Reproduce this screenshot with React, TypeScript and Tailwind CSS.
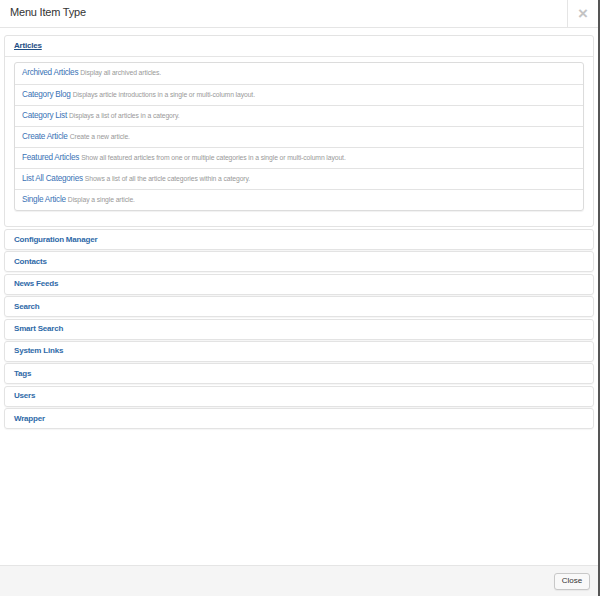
import React from 'react';

const articleItems = [
  { title: 'Archived Articles', desc: 'Display all archived articles.' },
  { title: 'Category Blog', desc: 'Displays article introductions in a single or multi-column layout.' },
  { title: 'Category List', desc: 'Displays a list of articles in a category.' },
  { title: 'Create Article', desc: 'Create a new article.' },
  { title: 'Featured Articles', desc: 'Show all featured articles from one or multiple categories in a single or multi-column layout.' },
  { title: 'List All Categories', desc: 'Shows a list of all the article categories within a category.' },
  { title: 'Single Article', desc: 'Display a single article.' },
];

const groups = [
  'Configuration Manager',
  'Contacts',
  'News Feeds',
  'Search',
  'Smart Search',
  'System Links',
  'Tags',
  'Users',
  'Wrapper',
];

const App = () => {
  return (
    <div
      className="w-[600px] h-[596px] flex flex-col bg-white border-r-2 border-[#555] overflow-hidden"
      style={{ fontFamily: '"Liberation Sans", Arial, sans-serif' }}
    >
      {/* header */}
      <div className="flex h-[28px] border-b border-[#e5e5e5] shrink-0">
        <h3 className="flex-1 pl-[10px] pt-[6px] text-[11px] leading-[13px] tracking-[-0.2px] text-[#333]">Menu Item Type</h3>
        <div className="w-[31px] border-l border-[#e5e5e5] flex items-center justify-center">
          <span className="text-[17px] font-bold text-[#c4c4c4] leading-none">×</span>
        </div>
      </div>

      {/* body */}
      <div className="flex-1 px-[4px] pt-[7px]">
        <div className="border border-[#e3e3e3] rounded-[3px] mb-[2px]">
          <div className="h-[21px] border-b border-[#e5e5e5] px-[9px] flex items-center">
            <span className="text-[8px] tracking-[-0.2px] font-bold text-[#1f4f86] underline">Articles</span>
          </div>
          <div className="px-[9px] pt-[5px] pb-[15px]">
            <div className="border border-[#dcdcdc] rounded-[3px] shadow-[0_1px_1px_rgba(0,0,0,0.06)]">
              {articleItems.map((it, i) => (
                <div
                  key={it.title}
                  className={`h-[21px] flex items-center px-[7px] whitespace-nowrap ${i > 0 ? 'border-t border-[#e3e3e3]' : ''}`}
                >
                  <span className="text-[8.2px] tracking-[-0.25px] text-[#3a72b5]">{it.title}</span>
                  <span className="text-[6.8px] tracking-[-0.1px] text-[#999] ml-[2px]">{it.desc}</span>
                </div>
              ))}
            </div>
          </div>
        </div>

        {groups.map(g => (
          <div
            key={g}
            className="h-[21px] border border-[#e3e3e3] rounded-[3px] mb-[1.4px] px-[9px] flex items-center shadow-[0_1px_1px_rgba(0,0,0,0.04)]"
          >
            <span className="text-[8px] tracking-[-0.2px] font-bold text-[#2f6aa8]">{g}</span>
          </div>
        ))}
      </div>

      {/* footer */}
      <div className="h-[31px] shrink-0 bg-[#f5f5f5] border-t border-[#e5e5e5] flex items-center justify-end pr-[8px]">
        <button className="h-[17px] w-[36px] bg-[#f9f9f9] border border-[#c8c8c8] rounded-[3px] text-[8px] text-[#333] shadow-[0_1px_1px_rgba(0,0,0,0.05)]">
          Close
        </button>
      </div>
    </div>
  );
};

export default App;
